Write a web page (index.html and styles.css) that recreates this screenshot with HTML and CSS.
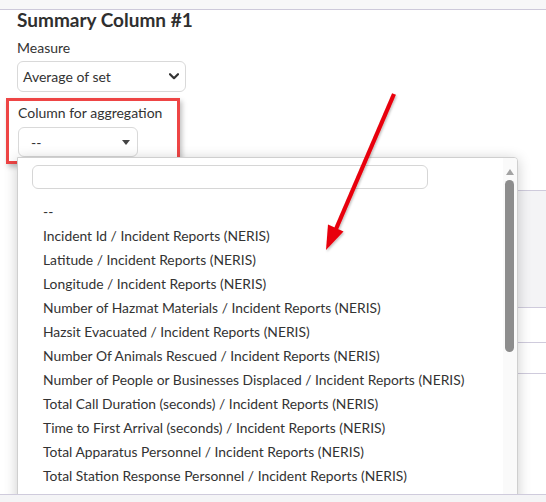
FILE: index.html
```html
<!DOCTYPE html>
<html lang="en">
<head>
    <meta charset="UTF-8">
    <meta name="viewport" content="width=device-width, initial-scale=1.0">
    <title>Summary Column</title>
    <link rel="stylesheet" href="styles.css">
</head>
<body>
    <div class="topbar"></div>

    <div class="editor">
        <h2 class="section-title">Summary Column #1</h2>

        <label class="field-label">Measure</label>
        <div class="select-box">
            <span>Average of set</span>
            <svg class="chevron" width="10" height="7" viewBox="0 0 10 7">
                <polyline points="1,1.2 5,5.2 9,1.2" fill="none" stroke="#333" stroke-width="2.2" stroke-linecap="round" stroke-linejoin="round"/>
            </svg>
        </div>

        <div class="highlight">
            <label class="field-label">Column for aggregation</label>
            <div class="select2">
                <span>--</span>
                <span class="caret"></span>
            </div>
        </div>

        <!-- table rows sitting behind the open dropdown -->
        <div class="rows-behind">
            <div class="row row-tall"></div>
            <div class="row row-mid"></div>
            <div class="row row-small"></div>
        </div>
    </div>

    <div class="dropdown">
        <div class="dropdown-search"></div>
        <ul class="options">
            <li>--</li>
            <li>Incident Id / Incident Reports (NERIS)</li>
            <li>Latitude / Incident Reports (NERIS)</li>
            <li>Longitude / Incident Reports (NERIS)</li>
            <li>Number of Hazmat Materials / Incident Reports (NERIS)</li>
            <li>Hazsit Evacuated / Incident Reports (NERIS)</li>
            <li>Number Of Animals Rescued / Incident Reports (NERIS)</li>
            <li>Number of People or Businesses Displaced / Incident Reports (NERIS)</li>
            <li>Total Call Duration (seconds) / Incident Reports (NERIS)</li>
            <li>Time to First Arrival (seconds) / Incident Reports (NERIS)</li>
            <li>Total Apparatus Personnel / Incident Reports (NERIS)</li>
            <li>Total Station Response Personnel / Incident Reports (NERIS)</li>
        </ul>
        <div class="scrollbar">
            <span class="scroll-up"></span>
            <span class="scroll-thumb"></span>
        </div>
    </div>

    <svg class="annotation-arrow" width="546" height="502" viewBox="0 0 546 502">
        <defs>
            <filter id="soft" x="-20%" y="-20%" width="140%" height="140%">
                <feDropShadow dx="1" dy="1.5" stdDeviation="1.2" flood-color="#000" flood-opacity="0.25"/>
            </filter>
        </defs>
        <g filter="url(#soft)">
            <line x1="394" y1="94" x2="336" y2="229" stroke="#e8040a" stroke-width="4.2"/>
            <polygon points="326,250 343.5,231.5 328,224.5" fill="#e8040a"/>
        </g>
    </svg>

    <div class="bottom-strip"></div>
</body>
</html>
```

FILE: styles.css
```css
body {
    margin: 0;
    width: 546px;
    height: 502px;
    overflow: hidden;
    position: relative;
    background: #fff;
    font-family: Lato, "Open Sans", sans-serif;
    color: #333;
}

.topbar {
    height: 9px;
    background: #f7f7f8;
    border-bottom: 1px solid #cdc9da;
}

.editor {
    padding-left: 17px;
}

.section-title {
    margin: 0 0 8px 0;
    font-size: 19px;
    line-height: 20px;
    font-weight: 700;
    color: #2f2f2f;
}

.field-label {
    display: block;
    font-size: 14px;
    line-height: 20px;
}

.select-box {
    margin-top: 3px;
    height: 29px;
    width: 156px;
    border: 1px solid #d9d9d9;
    border-radius: 6px;
    display: flex;
    align-items: center;
    justify-content: space-between;
    padding: 0 6px 0 5px;
    font-size: 14px;
}

.highlight {
    margin: 6px 0 0 -11px;
    width: 159px;
    border: 3px solid #ee4545;
    padding: 2px 0 4px 9px;
    box-shadow: 2px 3px 5px rgba(0, 0, 0, 0.25);
}

.select2 {
    margin-top: 4px;
    width: 120px;
    height: 30px;
    border: 1px solid #d9d9d9;
    border-radius: 6px;
    display: flex;
    align-items: center;
    justify-content: space-between;
    box-sizing: border-box;
    padding: 0 7px 0 12px;
    font-size: 14px;
}

.caret {
    width: 0;
    height: 0;
    border-left: 4px solid transparent;
    border-right: 4px solid transparent;
    border-top: 5px solid #444;
}

.rows-behind {
    margin-top: 26px;
}

.row {
    border-bottom: 1px solid #cfcbdc;
}

.row-tall {
    height: 116px;
    background: #f4f4f6;
    border-top: 1px solid #cfcbdc;
}

.row-mid {
    height: 34px;
}

.row-small {
    height: 30px;
}

.dropdown {
    position: absolute;
    top: 157px;
    left: 17px;
    width: 499px;
    height: 360px;
    background: #fff;
    border: 1px solid #cfcfcf;
    border-radius: 0 4px 0 0;
    box-shadow: 0 2px 14px rgba(0, 0, 0, 0.2);
    overflow: hidden;
}

.dropdown-search {
    margin: 7px 0 0 14px;
    width: 394px;
    height: 22px;
    border: 1px solid #d6d6d6;
    border-radius: 6px;
}

.options {
    list-style: none;
    margin: 11px 0 0 0;
    padding: 0 0 0 25px;
}

.options li {
    height: 24px;
    line-height: 24px;
    font-size: 13.85px;
    white-space: nowrap;
}

.scrollbar {
    position: absolute;
    top: 0;
    right: 0;
    bottom: 0;
    width: 14px;
    background: #fafafa;
}

.scroll-up {
    position: absolute;
    top: 11px;
    left: 3px;
    width: 0;
    height: 0;
    border-left: 4px solid transparent;
    border-right: 4px solid transparent;
    border-bottom: 6px solid #a3a3a3;
}

.scroll-thumb {
    position: absolute;
    top: 22px;
    left: 2px;
    width: 9px;
    height: 172px;
    border-radius: 5px;
    background: #8d8d8d;
}

.annotation-arrow {
    position: absolute;
    top: 0;
    left: 0;
    pointer-events: none;
}

.bottom-strip {
    position: absolute;
    left: 0;
    right: 0;
    bottom: 0;
    height: 7px;
    background: #f4f4f6;
    border-top: 1px solid #cfcbdc;
}
```
